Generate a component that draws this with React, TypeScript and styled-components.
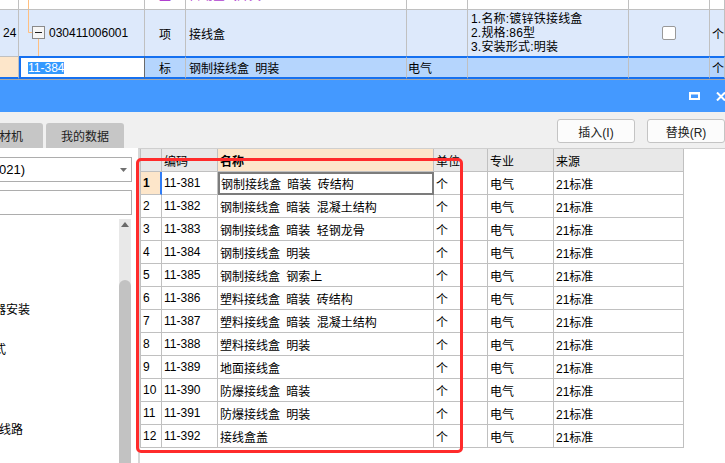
import { FC } from "react";
import styled, { createGlobalStyle } from "styled-components";

const Global = createGlobalStyle`
  html, body { margin: 0; padding: 0; overflow: hidden; }
  body {
    font-family: "Liberation Sans", "Noto Sans CJK SC", sans-serif;
    font-size: 12px;
    color: #000;
  }
`;

const Page = styled.div`
  position: relative;
  width: 725px;
  height: 463px;
  overflow: hidden;
  display: flex;
  flex-direction: column;
  background: #f0f0f0;
`;

/* spreadsheet behind the dialog */
const Sheet = styled.div`
  flex: none;
  display: grid;
  grid-template-columns: 19px 126px 41px 221px 61px 161px 81px 15px;
  grid-template-rows: 10px 46px 23px;
  background: #fff;
  border-bottom: 1px solid #a8a8a8;
`;

type RowKind = "top" | "mid" | "sel";

const SCell = styled.div<{ $bg?: string; $center?: boolean; $row: RowKind }>`
  box-sizing: border-box;
  display: flex;
  align-items: ${(p) => (p.$row === "top" ? "flex-start" : "center")};
  justify-content: ${(p) => (p.$center ? "center" : "flex-start")};
  padding: 0 3px;
  overflow: hidden;
  white-space: nowrap;
  word-spacing: 3px;
  background: ${(p) => p.$bg ?? "#fff"};
  border-right: 1px solid #c0c0c0;
  ${(p) => p.$row === "top" && "border-bottom: 1px solid #c0c0c0;"}
  ${(p) => p.$row === "sel" && "border-top: 2px solid #1570f0; border-bottom: 2px solid #1570f0;"}
`;

const EditCell = styled.div`
  box-sizing: border-box;
  display: flex;
  align-items: center;
  padding: 0 0 0 7px;
  background: #fff;
  border: 2px solid #1570f0;
  border-right: 1px solid #6a6a6a;
`;

const Picked = styled.span`
  background: #3399ff;
  color: #fff;
  line-height: 12px;
`;

const Ghost = styled.span<{ $shift?: number }>`
  color: #b040d0;
  line-height: 14px;
  margin-top: -11px;
  margin-left: ${(p) => p.$shift ?? 0}px;
`;

const TreeCode = styled.span`
  margin-left: 1px;
`;

const Desc = styled.div`
  line-height: 14px;
  white-space: pre;
  letter-spacing: 0.2px;
`;

const Check = styled.span`
  width: 14px;
  height: 14px;
  box-sizing: border-box;
  border: 1px solid #999;
  border-radius: 2px;
  background: #fff;
`;

/* dialog */
const TitleBar = styled.div`
  flex: none;
  height: 32px;
  background: #4499ff;
  display: flex;
  align-items: center;
  justify-content: flex-end;
  gap: 16px;
  margin-right: -1px;
`;

const Toolbar = styled.div`
  flex: none;
  height: 36px;
  display: flex;
  justify-content: space-between;
  align-items: flex-end;
`;

const Tabs = styled.div`
  display: flex;
  gap: 3px;
  margin-left: -33px;
`;

const Tab = styled.div<{ $pad: number }>`
  height: 25px;
  padding: 0 ${(p) => p.$pad}px;
  background: #c6c6c6;
  border-radius: 3px 3px 0 0;
  display: flex;
  align-items: center;
  color: #222;
`;

const Buttons = styled.div`
  align-self: flex-start;
  margin-top: 7px;
  display: flex;
  gap: 12px;
`;

const Btn = styled.button`
  width: 78px;
  height: 24px;
  border: 1px solid #c4c4c4;
  border-radius: 3px;
  background: #fcfcfc;
  font-family: "Liberation Sans", "Noto Sans CJK SC", sans-serif;
  font-size: 12px;
  color: #222;
  padding: 0;
`;

const Main = styled.div`
  flex: 1;
  min-height: 0;
  display: flex;
`;

const Side = styled.div`
  width: 138px;
  flex: none;
  box-sizing: border-box;
  background: #fff;
  padding: 9px 6px 0 0;
  display: flex;
  flex-direction: column;
`;

const Field = styled.div<{ $gap?: number }>`
  flex: none;
  height: 25px;
  box-sizing: border-box;
  margin-top: ${(p) => p.$gap ?? 0}px;
  border: 1px solid #adadad;
  border-left: none;
  display: flex;
  align-items: center;
  justify-content: space-between;
  padding-right: 4px;
  font-size: 13px;
`;

const FieldText = styled.span`
  margin-left: -1px;
`;

const TreeArea = styled.div`
  flex: 1;
  display: flex;
  min-height: 0;
`;

const TreeList = styled.div`
  flex: 1;
  padding-top: 5px;
  overflow: hidden;
`;

const TreeRow = styled.div<{ $shift: number }>`
  height: 20px;
  line-height: 20px;
  white-space: nowrap;
  margin-left: ${(p) => p.$shift}px;
`;

const Scroll = styled.div`
  width: 12px;
  margin: 4px 1px 0 0;
  background: #e8e8e8;
  display: flex;
  flex-direction: column;
  align-items: center;
`;

const Thumb = styled.div`
  flex: 1;
  width: 12px;
  margin-top: 53px;
  background: #c2c2c2;
  border-radius: 6px 6px 0 0;
`;

const Pane = styled.div`
  flex: 1;
  background: #fff;
  border-left: 2px solid #d6d6d6;
  border-top: 1px solid #cfcfcf;
`;

const Grid = styled.div`
  display: grid;
  grid-template-columns: 21px 56px 216px 54px 66px 130px;
  grid-auto-rows: 23px;
  width: 544px;
  box-sizing: border-box;
  border-left: 1px solid #c0c0c0;
`;

const GCell = styled.div<{ $head?: boolean; $bg?: string; $bold?: boolean; $current?: boolean; $mark?: boolean }>`
  box-sizing: border-box;
  display: flex;
  align-items: center;
  padding: 0 2px;
  white-space: nowrap;
  overflow: hidden;
  word-spacing: 3px;
  background: ${(p) => p.$bg ?? (p.$head ? "#e8e8e8" : "#fff")};
  font-weight: ${(p) => (p.$bold ? 700 : 400)};
  border-right: ${(p) => (p.$mark ? "2px solid #2f7cf6" : "1px solid #c0c0c0")};
  border-bottom: 1px solid #c0c0c0;
  ${(p) => p.$current && "border: 2px solid #7c7c7c; padding-left: 1px;"}
`;

const Mark = styled.div`
  position: absolute;
  left: 136px;
  top: 158px;
  width: 327px;
  height: 295px;
  box-sizing: border-box;
  border: 3px solid #ff2b2b;
  border-radius: 5px;
  pointer-events: none;
`;

const PEACH = "#fde6ca";
const ROW1 = "#dde9fb";
const ROW2 = "#b5d5fd";

const rows = [
  ["11-381", "钢制接线盒 暗装 砖结构"],
  ["11-382", "钢制接线盒 暗装 混凝土结构"],
  ["11-383", "钢制接线盒 暗装 轻钢龙骨"],
  ["11-384", "钢制接线盒 明装"],
  ["11-385", "钢制接线盒 钢索上"],
  ["11-386", "塑料接线盒 暗装 砖结构"],
  ["11-387", "塑料接线盒 暗装 混凝土结构"],
  ["11-388", "塑料接线盒 明装"],
  ["11-389", "地面接线盒"],
  ["11-390", "防爆接线盒 暗装"],
  ["11-391", "防爆接线盒 明装"],
  ["11-392", "接线盒盖"],
];

const tree: [string, number][] = [
  ["", 0], ["", 0], ["", 0], ["", 0],
  ["器安装", -6], ["", 0], ["式", -6], ["", 0],
  ["", 0], ["", 0], ["线路", -1], ["", 0], ["", 0],
];

const App: FC = () => {
  return (
    <Page>
      <Global />
      <Sheet>
        {/* row cut off at the top */}
        <SCell $row="top" />
        <SCell $row="top">
          <svg width="29" height="10" style={{ marginLeft: -3, flex: "none" }}>
            <line x1="9.5" y1="0" x2="9.5" y2="10" stroke="#ffbf80" />
          </svg>
          <Ghost $shift={19}>030411001001</Ghost>
        </SCell>
        <SCell $row="top" $center><Ghost>主</Ghost></SCell>
        <SCell $row="top"><Ghost>自动空气开关</Ghost></SCell>
        <SCell $row="top" />
        <SCell $row="top" />
        <SCell $row="top" />
        <SCell $row="top"><Ghost $shift={-1}>个</Ghost></SCell>

        <SCell $row="mid" $bg={ROW1}>24</SCell>
        <SCell $row="mid" $bg={ROW1} style={{ paddingLeft: 0 }}>
          <svg width="29" height="46" style={{ flex: "none" }}>
            <line x1="9.5" y1="0" x2="9.5" y2="22.5" stroke="#ffbf80" />
            <line x1="9.5" y1="22.5" x2="13" y2="22.5" stroke="#ffbf80" />
            <line x1="19.5" y1="29" x2="19.5" y2="46" stroke="#ffbf80" />
            <rect x="13.5" y="16.5" width="12" height="12" fill="#f6f6f6" stroke="#8a8a8a" />
            <line x1="16" y1="22.5" x2="23" y2="22.5" stroke="#222" />
          </svg>
          <TreeCode>030411006001</TreeCode>
        </SCell>
        <SCell $row="mid" $bg={ROW1} $center>项</SCell>
        <SCell $row="mid" $bg={ROW1}>接线盒</SCell>
        <SCell $row="mid" $bg={ROW1} />
        <SCell $row="mid" $bg={ROW1}>
          <Desc>{"1.名称:镀锌铁接线盒\n2.规格:86型\n3.安装形式:明装"}</Desc>
        </SCell>
        <SCell $row="mid" $bg={ROW1} $center><Check /></SCell>
        <SCell $row="mid" $bg={ROW1} style={{ paddingLeft: 2 }}>个</SCell>

        <SCell $row="sel" $bg={PEACH} style={{ borderTopColor: "#c0c0c0", borderTopWidth: 1 }} />
        <EditCell><Picked>11-384</Picked></EditCell>
        <SCell $row="sel" $bg={ROW2} $center>标</SCell>
        <SCell $row="sel" $bg={ROW2}>钢制接线盒 明装</SCell>
        <SCell $row="sel" $bg={ROW2} style={{ paddingLeft: 1 }}>电气</SCell>
        <SCell $row="sel" $bg={ROW2} />
        <SCell $row="sel" $bg={ROW2} />
        <SCell $row="sel" $bg={ROW2} style={{ paddingLeft: 2 }}>个</SCell>
      </Sheet>

      <TitleBar>
        <svg width="11" height="8" viewBox="0 0 11 8">
          <rect x="1" y="1.5" width="9" height="5.5" fill="none" stroke="#fff" strokeWidth="2" />
          <rect x="0" y="0" width="11" height="2" fill="#fff" />
        </svg>
        <svg width="10" height="9" viewBox="0 0 10 9">
          <path d="M1 0.5 L9 8.5 M9 0.5 L1 8.5" stroke="#fff" strokeWidth="2" />
        </svg>
      </TitleBar>

      <Toolbar>
        <Tabs>
          <Tab $pad={20}>人材机</Tab>
          <Tab $pad={15}>我的数据</Tab>
        </Tabs>
        <Buttons>
          <Btn>插入(I)</Btn>
          <Btn>替换(R)</Btn>
        </Buttons>
      </Toolbar>

      <Main>
        <Side>
          <Field>
            <FieldText>021)</FieldText>
            <svg width="7" height="4" viewBox="0 0 7 4">
              <path d="M0 0 H7 L3.5 4 Z" fill="#707070" />
            </svg>
          </Field>
          <Field $gap={8} />
          <TreeArea>
            <TreeList>
              {tree.map(([t, s], i) => (
                <TreeRow key={i} $shift={s}>{t}</TreeRow>
              ))}
            </TreeList>
            <Scroll>
              <svg width="8" height="5" viewBox="0 0 8 5" style={{ marginTop: 3 }}>
                <path d="M0 5 L4 0 L8 5 Z" fill="#6a6a6a" />
              </svg>
              <Thumb />
            </Scroll>
          </TreeArea>
        </Side>

        <Pane>
          <Grid>
            <GCell $head />
            <GCell $head>编码</GCell>
            <GCell $head $bg={PEACH} $bold>名称</GCell>
            <GCell $head>单位</GCell>
            <GCell $head>专业</GCell>
            <GCell $head>来源</GCell>
            {rows.map(([code, name], i) => {
              const first = i === 0;
              return [
                <GCell key={`n${i}`} $bg={first ? PEACH : undefined} $bold={first} $mark={first}>
                  {i + 1}
                </GCell>,
                <GCell key={`c${i}`}>{code}</GCell>,
                <GCell key={`m${i}`} $current={first}>{name}</GCell>,
                <GCell key={`u${i}`}>个</GCell>,
                <GCell key={`z${i}`}>电气</GCell>,
                <GCell key={`s${i}`}>21标准</GCell>,
              ];
            })}
          </Grid>
        </Pane>
      </Main>

      <Mark />
    </Page>
  );
};

export default App;
